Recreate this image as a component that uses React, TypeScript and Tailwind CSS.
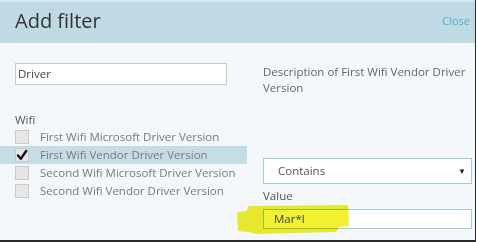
const ROWS = [
  { label: 'First Wifi Microsoft Driver Version', checked: false },
  { label: 'First Wifi Vendor Driver Version', checked: true },
  { label: 'Second Wifi Microsoft Driver Version', checked: false },
  { label: 'Second Wifi Vendor Driver Version', checked: false },
]

function Checkbox({ checked }: { checked: boolean }) {
  return (
    <div className="w-[14px] h-[14px] border border-[#c9c9c9] bg-[#e6e6e6] flex items-center justify-center">
      {checked && (
        <svg width="12" height="12" viewBox="0 0 12 12">
          <path d="M2 6.5 L4.8 9.8 L10.2 2" fill="none" stroke="#111" strokeWidth="2.4" strokeLinecap="round" strokeLinejoin="round" />
        </svg>
      )}
    </div>
  )
}

export default function App() {
  return (
    <div
      className="w-[478px] h-[242px] bg-white overflow-hidden"
      style={{ fontFamily: '"Open Sans", "Noto Sans", sans-serif' }}
    >
      <div className="w-[476px] h-[242px] bg-[#f3f7f9] border-r border-b-2 border-[#2b2b2b] flex flex-col">
        {/* Header */}
        <div className="h-[43px] shrink-0 bg-[#bfdae4] border-t-2 border-[#d3e6ed] flex items-center justify-between pl-[15px] pr-[5px]">
          <span className="text-[20px] leading-none text-[#333] -mt-[3px]">Add filter</span>
          <span className="text-[11px] text-[#4db0d1] -mt-[2px]">Close</span>
        </div>

        <div className="flex flex-1">
          {/* Left column */}
          <div className="w-[247px] shrink-0 pt-[20px]">
            <div className="ml-[15px] w-[212px] h-[22px] border border-[#c8c8c8] bg-white flex items-center pl-[2px]">
              <span className="text-[11.5px] text-[#444]">Driver</span>
            </div>
            <div className="ml-[15px] mt-[27px] text-[11.5px] leading-[16px] text-[#555]">Wifi</div>
            <div className="flex flex-col">
              {ROWS.map(r => (
                <div
                  key={r.label}
                  className={`h-[18px] flex items-center pl-[15px] gap-[11px] ${r.checked ? 'bg-[#c5dde6]' : ''}`}
                >
                  <Checkbox checked={r.checked} />
                  <span className="text-[11.5px] text-[#7a7a7a]">{r.label}</span>
                </div>
              ))}
            </div>
          </div>

          {/* Right column */}
          <div className="flex-1 pt-[21px] pl-[16px] pr-[3px]">
            <p className="text-[11.5px] leading-[16px] text-[#666]">
              Description of First Wifi Vendor Driver Version
            </p>
            <div className="mt-[62px] h-[26px] border border-[#9fcfdc] bg-white flex items-center justify-between pl-[14px] pr-[5px]">
              <span className="text-[11.5px] text-[#555]">Contains</span>
              <span className="text-[8px] text-[#222]">▼</span>
            </div>
            <div className="mt-[4px] text-[11.5px] leading-[16px] text-[#555]">Value</div>
            <div className="relative mt-[5px] h-[20px] border border-[#9fcfdc] bg-white flex items-center pl-[10px]">
              <svg
                className="absolute left-[-28px] top-[-6px] mix-blend-multiply pointer-events-none"
                width="116"
                height="32"
                viewBox="0 0 116 32"
              >
                <path
                  d="M12 2 L112 1 L113 22 L103 23 L100 28 L20 30 L13 28 L2 27 L1 8 L11 7 Z"
                  fill="#f2f030"
                />
              </svg>
              <span className="relative text-[11.5px] text-[#444]">Mar*l</span>
            </div>
          </div>
        </div>
      </div>
    </div>
  )
}
